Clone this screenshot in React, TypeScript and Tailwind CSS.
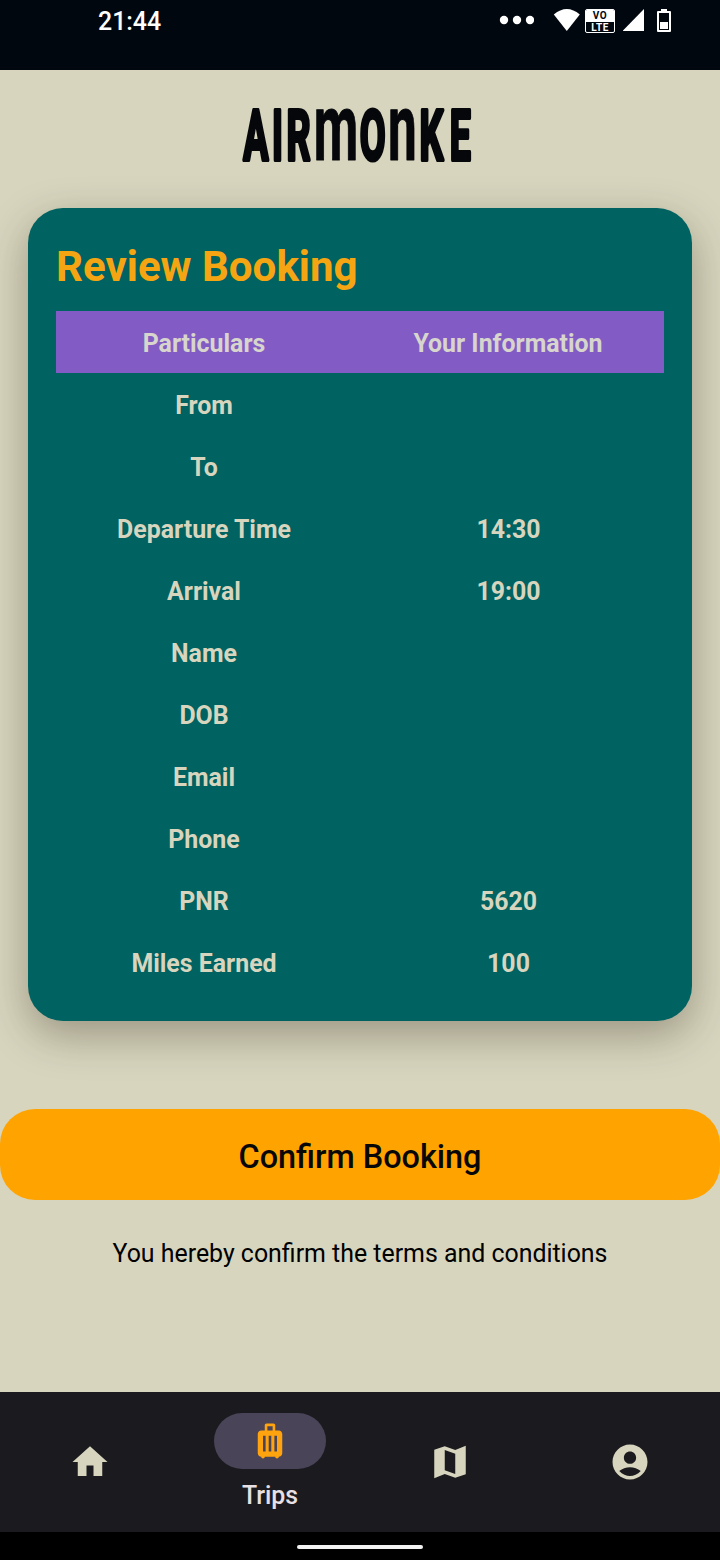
import React from 'react';

const rows: [string, string][] = [
  ['From', ''],
  ['To', ''],
  ['Departure Time', '14:30'],
  ['Arrival', '19:00'],
  ['Name', ''],
  ['DOB', ''],
  ['Email', ''],
  ['Phone', ''],
  ['PNR', '5620'],
  ['Miles Earned', '100'],
];

function Icon({ d }: { d: string }) {
  return (
    <svg viewBox="0 0 24 24" className="size-[42px] fill-current" aria-hidden="true">
      <path d={d} />
    </svg>
  );
}

const HOME = 'M10 20v-6h4v6h5v-8h3L12 3 2 12h3v8z';
const LUGGAGE =
  'M17 6h-2V3c0-.55-.45-1-1-1h-4c-.55 0-1 .45-1 1v3H7c-1.1 0-2 .9-2 2v11c0 1.1.9 2 2 2 0 .55.45 1 1 1s1-.45 1-1h6c0 .55.45 1 1 1s1-.45 1-1c1.1 0 2-.9 2-2V8c0-1.1-.9-2-2-2zM9.5 18H8V9h1.5v9zm3.25 0h-1.5V9h1.5v9zm.75-12h-3V3.5h3V6zM16 18h-1.5V9H16v9z';
const MAP =
  'M15 5.1L9 3 3 5.02v16.2l6-2.33 6 2.1 6-2.02V2.77L15 5.1zm0 13.79l-6-2.11V5.11l6 2.11v11.67z';
const ACCOUNT =
  'M12 2C6.48 2 2 6.48 2 12s4.48 10 10 10 10-4.48 10-10S17.52 2 12 2zm0 4c1.93 0 3.5 1.57 3.5 3.5S13.93 13 12 13s-3.5-1.57-3.5-3.5S10.07 6 12 6zm0 14c-2.03 0-4.43-.82-6.14-2.88C7.55 15.8 9.68 15 12 15s4.45.8 6.14 2.12C16.43 19.18 14.03 20 12 20z';

function Wordmark() {
  return (
    <svg viewBox="0 0 240 70" className="h-[70px] w-[240px] overflow-visible" role="img" aria-label="AIRMONKE">
      <text
        transform="translate(0 60) scale(0.54 1)"
        strokeLinejoin="round"
        className="fill-[#05070b] stroke-[#05070b] stroke-[4px] text-[69.5px] font-bold"
      >
        <tspan x="11.5 65 91.5">AIR</tspan>
        <tspan x="142" className="stroke-[1px] text-[95px]">m</tspan>
        <tspan x="227.5">O</tspan>
        <tspan x="279.5" className="stroke-[1px] text-[95px]">n</tspan>
        <tspan x="338 394">KE</tspan>
      </text>
    </svg>
  );
}

function StatusBar() {
  return (
    <header className="flex h-[70px] shrink-0 items-start justify-between bg-[#01070f] pr-[49px] pl-[98px] text-white">
      <span className="pt-[7px] text-[24.9px] leading-[30px] font-medium">21:44</span>
      <div className="flex items-start pt-[8px]">
        <svg viewBox="0 0 36 24" className="mr-[19px] h-[24px] w-[36px] fill-white">
          <circle cx="6" cy="12" r="4.2" />
          <circle cx="19" cy="12" r="4.2" />
          <circle cx="32" cy="12" r="4.2" />
        </svg>
        <svg viewBox="0 0 26 24" className="mr-[5px] h-[24px] w-[26px] overflow-visible fill-white">
          <path d="M.8 6.5Q13.8-4.5 26.8 6.5L13.8 23z" />
        </svg>
        <div className="mt-px mr-[8px] ml-px flex h-[24px] w-[30px] flex-col overflow-hidden rounded-[2px] border border-white text-center font-bold">
          <span className="h-[12px] bg-white text-[10px] leading-[12px] tracking-[0.5px] text-[#01070f]">VO</span>
          <span className="h-[10px] text-[10px] leading-[11px] tracking-[0.5px]">LTE</span>
        </div>
        <svg viewBox="0 0 22 24" className="mr-[12px] h-[24px] w-[22px] fill-white">
          <path d="M21 1v22H-.5z" />
        </svg>
        <svg viewBox="0 0 14 24" className="mt-px h-[24px] w-[14px]">
          <path fill="white" fillRule="evenodd" d="M4 0h6v2h3q1 0 1 1v19q0 1-1 1H1q-1 0-1-1V3q0-1 1-1h3zM2 4v17h10V4z" />
          <path fill="white" d="M3 13h8v7H3z" />
        </svg>
      </div>
    </header>
  );
}

export default function App() {
  return (
    <div className="flex h-[1560px] w-[720px] flex-col overflow-hidden bg-[#d7d5be] font-['Roboto',sans-serif] text-black">
      <StatusBar />
      <main className="flex flex-1 flex-col">
        <div className="flex h-[138px] shrink-0 justify-center pt-[30px] pr-[6px]">
          <Wordmark />
        </div>

        <section className="mx-[28px] h-[813px] shrink-0 rounded-[35px] bg-[#006261] p-[28px] shadow-[0_14px_42px_rgba(50,40,25,0.36)]">
          <h1 className="h-[75px] text-[42.1px] leading-[62px] font-bold text-[#f5a511]">Review Booking</h1>
          <div className="grid h-[62px] grid-cols-2 items-center bg-[#825cc4] text-center text-[24.9px] font-bold text-[#d7d5cc]">
            <span className="pt-[4px] pr-[8px]">Particulars</span>
            <span className="pt-[4px] pr-[8px]">Your Information</span>
          </div>
          {rows.map(([label, value]) => (
            <div
              key={label}
              className="grid h-[62px] grid-cols-2 items-center text-center text-[24.9px] font-bold text-[#d7d5be]"
            >
              <span className="pt-[4px] pr-[8px]">{label}</span>
              <span className="pt-[4px] pr-[7px]">{value}</span>
            </div>
          ))}
        </section>

        <button className="mt-[88px] h-[91px] w-full shrink-0 rounded-[35px] bg-[#ffa300] pt-[6px] text-[32.4px] font-medium text-[#080808]">
          Confirm Booking
        </button>
        <p className="mt-[36px] text-center text-[24.9px] leading-[35px]">
          You hereby confirm the terms and conditions
        </p>
      </main>

      <nav className="grid h-[140px] shrink-0 grid-cols-4 bg-[#1b1a1e] text-[#d7d5be]">
        <div className="flex items-center justify-center">
          <Icon d={HOME} />
        </div>
        <div className="flex flex-col items-center pt-[21px]">
          <div className="flex h-[56px] w-[112px] items-center justify-center rounded-full bg-[#4a4458] text-[#ffa30e]">
            <Icon d={LUGGAGE} />
          </div>
          <span className="mt-[10px] text-[24.9px] leading-[34px] font-medium text-[#e7e1e6]">Trips</span>
        </div>
        <div className="flex items-center justify-center">
          <Icon d={MAP} />
        </div>
        <div className="flex items-center justify-center">
          <Icon d={ACCOUNT} />
        </div>
      </nav>
      <footer className="flex h-[28px] shrink-0 justify-center bg-black pt-[13px]">
        <div className="h-[4px] w-[126px] rounded-full bg-[#f2f2f2]" />
      </footer>
    </div>
  );
}
